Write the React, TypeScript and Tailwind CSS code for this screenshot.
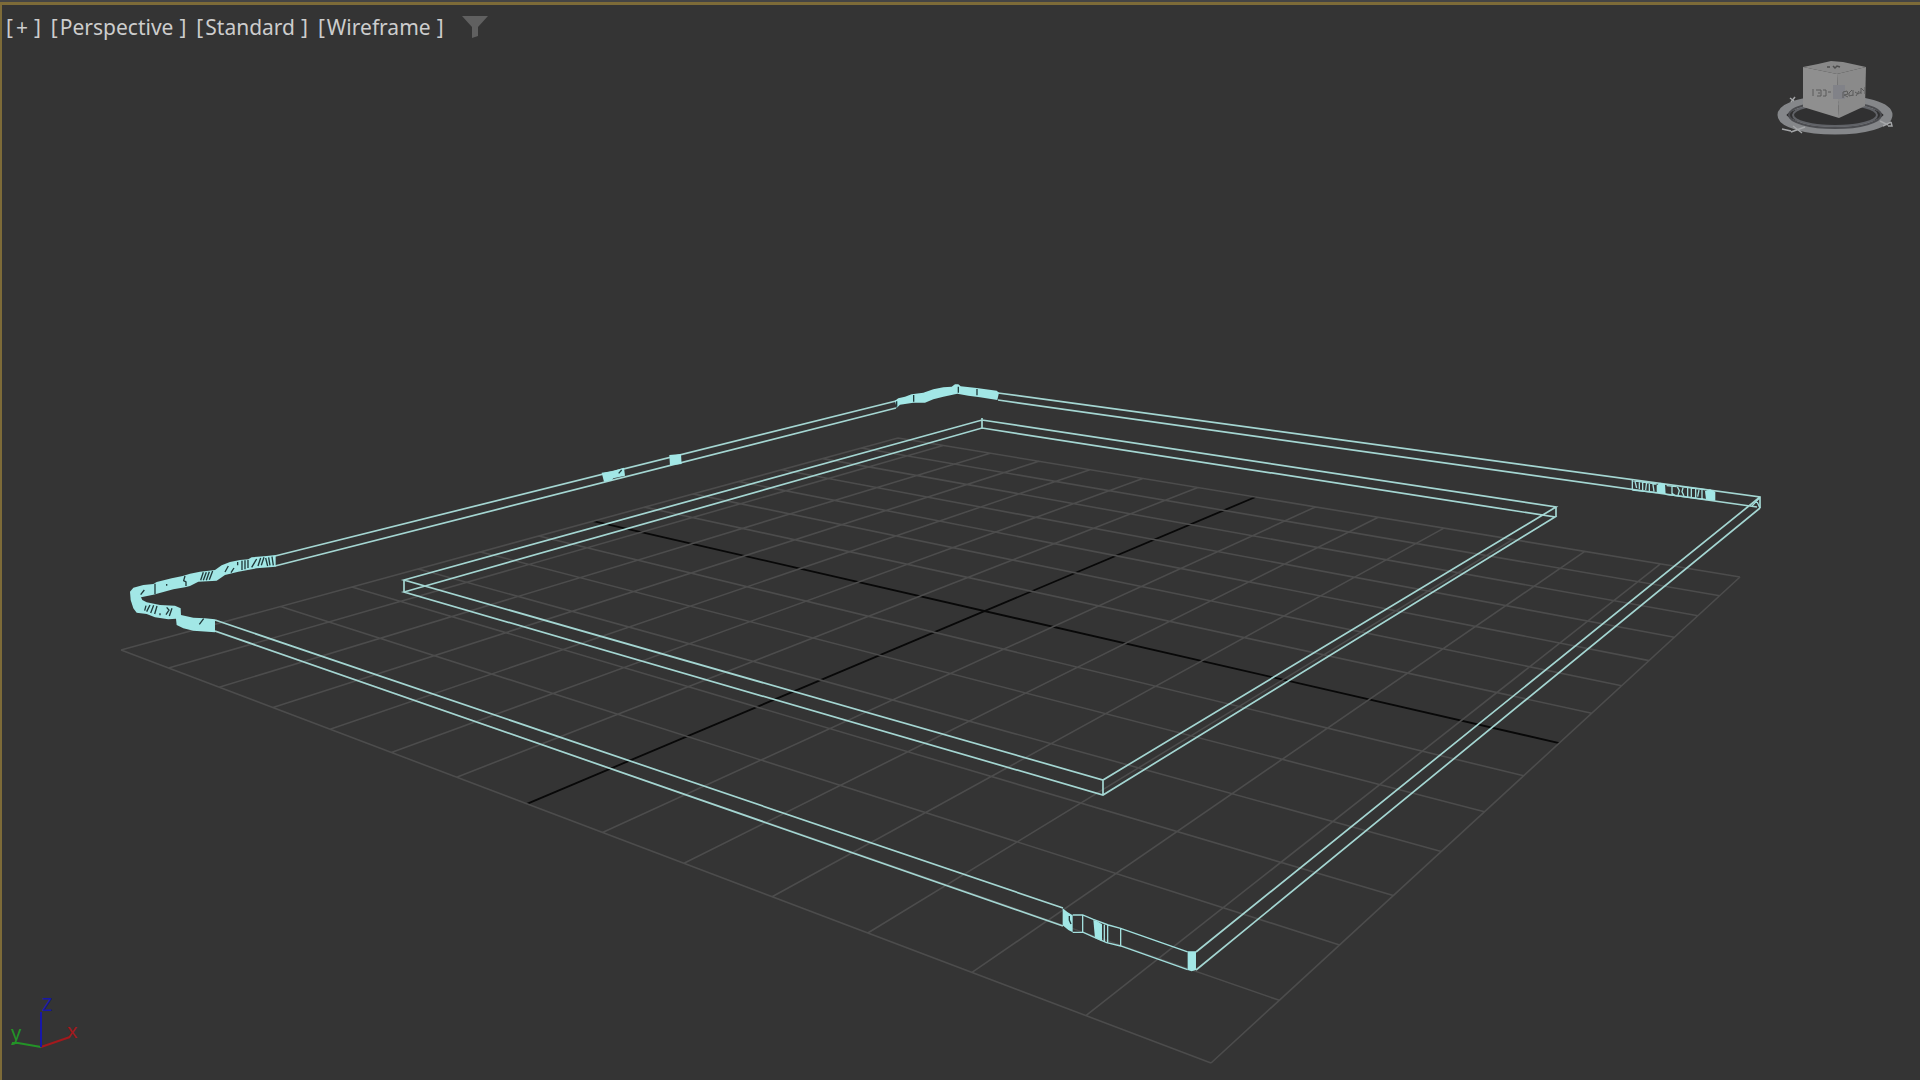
import React from 'react';

type Point = [number, number];

interface PatchData {
  x: number;
  y: number;
  fills: string[];
  lines?: string;
  gaps?: string;
}

const GRID_CELLS = 14;

// Ground plane corners: west, south, east, north
const CORNERS: Point[] = [[121, 650], [1211, 1063], [1740, 577], [898, 438]];

// Maps the unit square onto the four corners with perspective
const project = (u: number, v: number): Point => {
  const [[x0, y0], [x1, y1], [x2, y2], [x3, y3]] = CORNERS;
  const dx1 = x1 - x2;
  const dx2 = x3 - x2;
  const dy1 = y1 - y2;
  const dy2 = y3 - y2;
  const sx = x0 - x1 + x2 - x3;
  const sy = y0 - y1 + y2 - y3;
  const det = dx1 * dy2 - dx2 * dy1;
  const g = (sx * dy2 - dx2 * sy) / det;
  const h = (dx1 * sy - sx * dy1) / det;
  const w = g * u + h * v + 1;
  return [
    ((x1 - x0 + g * x1) * u + (x3 - x0 + h * x3) * v + x0) / w,
    ((y1 - y0 + g * y1) * u + (y3 - y0 + h * y3) * v + y0) / w,
  ];
};

const segment = (a: Point, b: Point) =>
  `M${a[0].toFixed(1)} ${a[1].toFixed(1)}L${b[0].toFixed(1)} ${b[1].toFixed(1)}`;

const steps = Array.from({ length: GRID_CELLS + 1 }, (_, i) => i);
const gridPath = steps
  .filter((i) => i !== GRID_CELLS / 2)
  .map((i) => {
    const t = i / GRID_CELLS;
    return segment(project(t, 0), project(t, 1)) + segment(project(0, t), project(1, t));
  })
  .join('');
const axisPath = segment(project(0.5, 0), project(0.5, 1)) + segment(project(0, 0.5), project(1, 0.5));

const INNER_BOX =
  'M404 580L982 420L1556 507L1103 780Z M404 592L982 428L1555 517L1103 795Z M404 580V592M982 418V428M1556 507V517M1103 780V795';

const OUTER_WALL =
  'M275 556L896 401 M275 566L896 408 M998 393L1760 497V508 M998 400L1757 507 M1760 497L1196 952 M1760 508L1196 970 M215 620L1063 908 M215 631L1063 926';

// Dense mesh areas, drawn in thirds of a unit from their own origin
const PATCHES: PatchData[] = [
  {
    x: 110,
    y: 540,
    fills: [
      'M497 45L470 48 425 52 415 58 390 60 360 66 335 76 315 90 270 95 240 101 218 108 185 115 140 126 130 132 100 135 70 143 60 155 62 180 70 205 80 218 110 222 135 232 175 238 198 236 200 255 220 265 250 272 315 277 315 238 285 235 250 233 213 225 212 205 195 197 150 195 110 187 97 180 93 172 130 164 190 148 225 142 240 138 265 125 320 122 345 105 385 95 440 85 497 80Z',
    ],
    gaps: 'M135 131V162M225 108L221 122 228 126V138M280 97L272 121M289 97L280 121M298 95L289 121M308 93L298 119M355 78L345 96M372 84L363 98M383 66V76M396 62V90M405 61V88M414 60V84M440 57L425 82M452 54L444 78M462 52L454 76M467 54L473 78M476 52L480 76M486 50L490 76M108 197L104 212M120 195L110 215M131 196L122 219M141 198L134 222M150 220V226M170 202L177 210 168 224M186 205L178 228M281 236L268 253M170 132V137M103 150L92 164',
  },
  {
    x: 880,
    y: 370,
    fills: [
      'M45 92L55 85 75 80 95 73 130 68 160 58 190 52 215 50 225 43 235 43 242 49 290 54 350 62 357 68 352 90 300 82 265 77 232 71 190 80 160 88 135 98 100 98 60 104 50 114Z',
    ],
    gaps: 'M50 94V110M101 75V95M235 50V68M291 57V76',
  },
  {
    x: 580,
    y: 440,
    fills: ['M65 98L100 93 132 83 135 107 100 115 95 121 72 125Z', 'M268 45L303 42 305 72 270 76Z'],
    gaps: 'M125 90L116 100',
  },
  {
    x: 1600,
    y: 460,
    fills: ['M170 76L180 68 195 72 197 103 170 98Z', 'M315 93L330 88 346 95 346 122 318 119Z'],
    lines:
      'M97 60V90M105 64L110 84M118 64V88M128 66V90M140 66L137 90M148 68V94M158 68L162 94M97 62L170 72M97 90L170 98M200 77L230 80M216 80V100L224 106M232 80L238 92 234 106M250 80L246 95 252 108M263 82V110M274 84V112M287 84V114M297 90L293 110M306 88V118M197 103L320 119M240 79L315 89M480 112L456 138M470 122L480 145',
  },
  {
    x: 1040,
    y: 890,
    fills: ['M68 55L82 66 98 76 98 127 85 120 68 106Z', 'M160 90L172 94 186 103 186 154 165 144Z', 'M443 184H468V240L455 244 443 240Z'],
    lines: 'M98 75H128L160 88 205 105 242 115 443 186M98 127H130L165 143 200 158 242 168 443 239M128 75V128M193 104V157M203 105V160M242 115V168',
    gaps: 'M88 78V90L93 102',
  },
];

const MENUS = ['Perspective', 'Standard', 'Wireframe'];

const Scene: React.FC = () => (
  <svg
    className="absolute inset-0 h-full w-full"
    viewBox="0 0 1920 1080"
    preserveAspectRatio="xMidYMid slice"
    fill="none"
    aria-hidden="true"
  >
    <path d={axisPath} stroke="#080808" strokeWidth="1.8" />
    <path d={gridPath} stroke="#4c4c4c" strokeWidth="1.6" />
    <path d={INNER_BOX} stroke="#a4d6d2" strokeWidth="1.7" />
    <path d={OUTER_WALL} stroke="#a4d6d2" strokeWidth="1.7" />
    {PATCHES.map((patch) => (
      <g key={patch.x} transform={`translate(${patch.x} ${patch.y}) scale(0.3333)`}>
        {patch.fills.map((d) => (
          <path key={d} d={d} fill="#a2e7e6" />
        ))}
        {patch.lines && <path d={patch.lines} stroke="#a2dfdd" strokeWidth="4" />}
        {patch.gaps && <path d={patch.gaps} stroke="#213a3b" strokeWidth="4" />}
      </g>
    ))}
  </svg>
);

const ViewCube: React.FC = () => (
  <svg width="124" height="84" viewBox="0 0 124 84" fill="none" aria-hidden="true">
    {/* Compass ring */}
    <ellipse cx="62" cy="54" rx="53" ry="15" fill="#303031" stroke="#85878a" strokeWidth="9" />
    <ellipse cx="62" cy="54" rx="46" ry="13" stroke="#4b4c50" strokeWidth="2" />
    <ellipse cx="62" cy="54" rx="42" ry="11" stroke="#606267" strokeWidth="2" />
    <path d="M9 68L18 70M20 65L29 72M18 71L32 66M107 60L115 64M110 65L118 61M115 65H119L118 61M17 37L21 40M18 41L22 36" stroke="#a4a6a8" strokeWidth="1.5" />
    {/* Cube */}
    <path d="M30 6L45 3 58 0 70 1 93 6 64 13Z" fill="#898989" />
    <path d="M30 6L64 13 66 57 30 46Z" fill="#8f8f8f" />
    <path d="M93 6L64 13 66 57 92 45Z" fill="#8a8a8a" />
    <path d="M60 24H72V38H60Z" fill="#818288" />
    <path d="M54 6H57M60 5L62 7 64 5 67 6" stroke="#4e4e4e" strokeWidth="1.5" />
    <path d="M40 28V35M43 29H48V35H44M46 31V33M50 29H53V35H50M55 31H58M70 37V31L74 30 75 33 71 34 75 36M79 29L76 32V35L80 34M80 29V35M82 31L85 33 88 31M83 35L86 30M88 33V27L91 30M92 26V33" stroke="#5a5a5a" strokeWidth="1" />
  </svg>
);

const AxisTripod: React.FC = () => (
  <svg width="80" height="76" viewBox="0 0 80 76" fill="none" role="img" aria-label="World axis">
    <path d="M35 63L12 59H6" stroke="#239327" strokeWidth="2" />
    <path d="M35 63L64 53" stroke="#a3191d" strokeWidth="2" />
    <path d="M35 63V28" stroke="#1717a8" strokeWidth="2" />
    <g className="font-['Noto_Sans']">
      <text x="36" y="27" fontSize="18" fill="#1717a8">Z</text>
      <text x="61" y="54" fontSize="20" fill="#a3191d">x</text>
      <text x="5" y="56" fontSize="20" fill="#239327">y</text>
    </g>
  </svg>
);

const App: React.FC = () => (
  <main className="flex min-h-screen flex-col bg-[#444444] pt-[2px] font-['Noto_Sans',sans-serif]">
    <section className="relative flex flex-1 flex-col justify-between border-l-2 border-t-[3px] border-[#7d6b38] bg-[#343434]">
      <div className="absolute -left-0.5 -top-[5px] bottom-0 right-0 overflow-hidden">
        <Scene />
      </div>

      <header className="relative flex items-start justify-between">
        <nav className="flex items-center gap-[10px] pl-1 pt-2 text-[21px] leading-[28px] text-[#cdcdcd]">
          <button type="button" className="flex gap-[3px] hover:text-white">
            <span>[</span>
            <span>+</span>
            <span className="pl-[3px]">]</span>
          </button>
          {MENUS.map((name) => (
            <button key={name} type="button" className="flex gap-[2px] hover:text-white">
              <span>[</span>
              <span>{name}</span>
              <span className="pl-1">]</span>
            </button>
          ))}
          <button type="button" aria-label="Filter" className="pl-2 text-[#606060] hover:text-white">
            <svg width="26" height="22" viewBox="0 0 26 22" fill="currentColor">
              <path d="M0 0H26L16 11V20L10 22V11Z" />
            </svg>
          </button>
        </nav>
        <button type="button" aria-label="View cube" className="mr-[23px] mt-14">
          <ViewCube />
        </button>
      </header>

      <div className="relative pb-5 pl-1">
        <AxisTripod />
      </div>
    </section>
  </main>
);

export default App;
